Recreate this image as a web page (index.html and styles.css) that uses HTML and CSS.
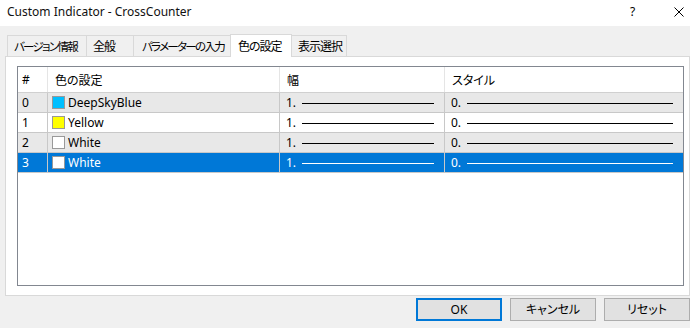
FILE: index.html
```html
<!DOCTYPE html>
<html lang="ja">
<head>
    <meta charset="UTF-8">
    <title>Custom Indicator - CrossCounter</title>
    <link rel="stylesheet" href="styles.css">
</head>
<body>
    <div class="dialog">
        <div class="titlebar">
            <span class="title">Custom Indicator - CrossCounter</span>
            <span class="help">?</span>
            <svg class="close" width="10" height="10" viewBox="0 0 10 10">
                <path d="M0.5 0.5 L9.5 9.5 M9.5 0.5 L0.5 9.5" stroke="#000" stroke-width="1" fill="none"/>
            </svg>
        </div>

        <div class="tabs">
            <div class="tab tab-about">バージョン情報</div>
            <div class="tab tab-common">全般</div>
            <div class="tab tab-inputs">パラメーターの入力</div>
            <div class="tab tab-colors active">色の設定</div>
            <div class="tab tab-vis">表示選択</div>
        </div>

        <div class="panel">
            <div class="grid">
                <div class="row head">
                    <div class="cell">#</div>
                    <div class="cell">色の設定</div>
                    <div class="cell">幅</div>
                    <div class="cell">スタイル</div>
                </div>
                <div class="row even">
                    <div class="cell">0</div>
                    <div class="cell"><span class="swatch" style="background:#00bfff"></span>DeepSkyBlue</div>
                    <div class="cell">1.<span class="line"></span></div>
                    <div class="cell">0.<span class="line"></span></div>
                </div>
                <div class="row">
                    <div class="cell">1</div>
                    <div class="cell"><span class="swatch" style="background:#ffff00"></span>Yellow</div>
                    <div class="cell">1.<span class="line"></span></div>
                    <div class="cell">0.<span class="line"></span></div>
                </div>
                <div class="row even">
                    <div class="cell">2</div>
                    <div class="cell"><span class="swatch" style="background:#ffffff"></span>White</div>
                    <div class="cell">1.<span class="line"></span></div>
                    <div class="cell">0.<span class="line"></span></div>
                </div>
                <div class="row selected">
                    <div class="cell">3</div>
                    <div class="cell"><span class="swatch" style="background:#ffffff"></span>White</div>
                    <div class="cell">1.<span class="line"></span></div>
                    <div class="cell">0.<span class="line"></span></div>
                </div>
            </div>
        </div>

        <div class="buttons">
            <button class="btn default">OK</button>
            <button class="btn">キャンセル</button>
            <button class="btn">リセット</button>
        </div>
    </div>
</body>
</html>
```

FILE: styles.css
```css
* {
    box-sizing: border-box;
}
body {
    margin: 0;
    background: #f0f0f0;
    font-family: "Noto Sans", "Noto Sans CJK JP", sans-serif;
    font-size: 12px;
    font-feature-settings: "palt";
    color: #000;
}
.dialog {
    width: 690px;
    height: 328px;
    overflow: hidden;
}
.titlebar {
    height: 26px;
    background: #fff;
    display: flex;
    align-items: center;
    padding-left: 7px;
}
.title {
    flex: 1;
    margin-top: -3px;
    color: #111;
}
.help {
    width: 20px;
    margin-top: -3px;
}
.close {
    margin: -2px 6px 0 24px;
}
.tabs {
    display: flex;
    align-items: flex-end;
    height: 30px;
    padding-left: 7px;
}
.tab {
    height: 21px;
    border: 1px solid #d9d9d9;
    border-bottom: none;
    margin-right: -1px;
    background: #f0f0f0;
    display: flex;
    align-items: center;
    padding: 0 0 1px 6px;
    white-space: nowrap;
    overflow: hidden;
    letter-spacing: -1px;
    font-family: "Noto Sans CJK JP", sans-serif;
}
.tab.active {
    height: 23px;
    background: #fff;
    position: relative;
    margin-bottom: -1px;
    z-index: 1;
    padding: 0 0 2px 7px;
}
.tab-about { width: 80px; font-size: 11.5px; letter-spacing: -1.7px; }
.tab-common { width: 48px; }
.tab-inputs { width: 98px; padding-left: 8px; font-size: 11.5px; letter-spacing: -1.7px; }
.tab-colors { width: 62px; }
.tab-vis { width: 56px; }
.panel {
    margin-left: 5px;
    width: 685px;
    height: 240px;
    background: #fff;
    border: 1px solid #d9d9d9;
    padding: 9px 0 0 11px;
}
.grid {
    width: 667px;
    height: 220px;
    border: 1px solid #828790;
}
.row {
    display: grid;
    grid-template-columns: 30px 232px 165px 236px;
    height: 20px;
    border-bottom: 1px solid #c8c8c8;
}
.row.head {
    height: 26px;
    border-bottom: 1px solid #d0d0d0;
}
.row.even {
    background: #e8e8e8;
}
.row.selected {
    background: #0078d7;
    color: #fff;
}
.cell {
    display: flex;
    align-items: center;
    padding-left: 6px;
    border-right: 1px solid #c8c8c8;
    white-space: nowrap;
}
.head .cell {
    border-right-color: #e5e5e5;
    padding-left: 7px;
}
.head .cell:first-child {
    padding-left: 8px;
}
.cell:last-child {
    border-right: none;
}
.row .cell:first-child {
    padding-left: 4px;
}
.row .cell:nth-child(2) {
    padding-left: 4px;
}
.head .cell:nth-child(2) {
    padding-left: 7px;
}
.swatch {
    width: 13px;
    height: 13px;
    border: 1px solid #999;
    margin-right: 3px;
}
.line {
    flex: 1;
    height: 1px;
    background: #000;
    margin: 1px 10px 0 6px;
}
.row .cell:last-child .line {
    margin-right: 8px;
}
.selected .line {
    background: #fff;
}
.buttons {
    display: flex;
    justify-content: flex-end;
    gap: 8px;
    padding-top: 2px;
}
.btn {
    width: 86px;
    height: 23px;
    background: #e1e1e1;
    border: 1px solid #adadad;
    font-family: inherit;
    font-size: 12px;
    font-feature-settings: "palt";
    color: #000;
    padding: 0 0 1px;
}
.btn.default {
    border: 2px solid #0078d7;
}
```
